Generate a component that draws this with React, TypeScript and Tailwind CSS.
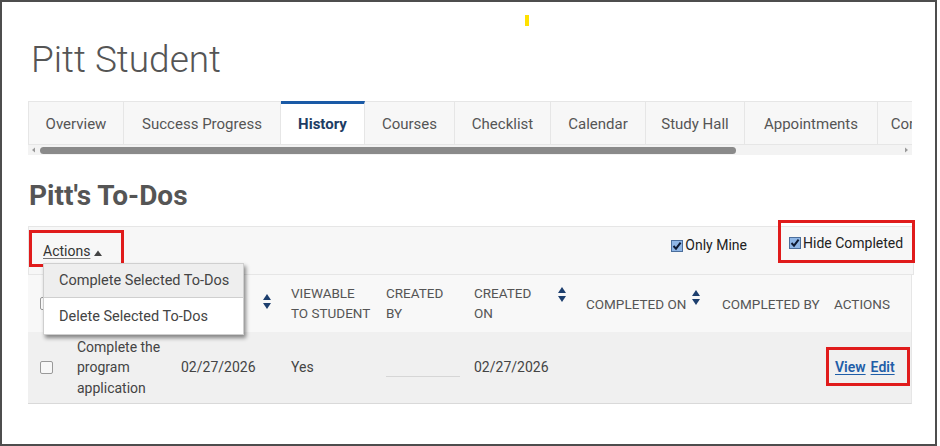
import React from "react";

const tabs = [
  { label: "Overview", w: "w-[95px]" },
  { label: "Success Progress", w: "w-[157px]" },
  { label: "History", w: "w-[84px]", active: true },
  { label: "Courses", w: "w-[90px]" },
  { label: "Checklist", w: "w-[96px]" },
  { label: "Calendar", w: "w-[95px]" },
  { label: "Study Hall", w: "w-[99px]" },
  { label: "Appointments", w: "w-[133px]" },
  { label: "Comments", w: "w-[100px]" },
];

const SortIcon = () => (
  <svg width="8" height="15" viewBox="0 0 8 15" className="shrink-0">
    <polygon points="0,6 4,0 8,6" fill="#1d3f6e" />
    <polygon points="0,9 8,9 4,15" fill="#1d3f6e" />
  </svg>
);

const CheckedBox = () => (
  <svg width="12" height="12" viewBox="0 0 12 12" className="shrink-0">
    <rect x="0.5" y="0.5" width="11" height="11" fill="#8fb6e6" stroke="#4b6e9c" />
    <path d="M2.5 6 L5 8.6 L9.6 2.6" fill="none" stroke="#0e1a33" strokeWidth="2" />
  </svg>
);

const App = () => {
  return (
    <div className="w-[940px] h-[446px] bg-white" style={{ fontFamily: "Roboto, 'Liberation Sans', sans-serif" }}>
      <div className="relative w-[937px] h-[446px] border-2 border-[#4d4d4d] overflow-hidden pl-[26px]">
        {/* stray yellow marker in the screenshot */}
        <div className="absolute left-[523px] top-[13px] w-[4px] h-[11px] bg-[#ffe100]" />

        <div className="mt-[35px] text-[37px] leading-[46px] font-light text-[#555] pl-[3px]">Pitt Student</div>

        {/* tabs */}
        <div className="mt-[18px] w-[884px] overflow-hidden">
          <div className="flex h-[44px] border-t border-b border-l border-[#e6e6e6] bg-[#f7f7f7] w-max">
            {tabs.map((t) => (
              <div
                key={t.label}
                className={
                  t.active
                    ? `${t.w} shrink-0 flex items-center justify-center pt-[1px] bg-white border-t-[3px] border-[#1a5aa6] border-r border-r-[#e6e6e6] -mt-px text-[15px] font-bold text-[#1d3c63]`
                    : `${t.w} shrink-0 flex items-center justify-center pt-[3px] border-r border-[#e6e6e6] text-[15px] text-[#555]`
                }
              >
                {t.label}
              </div>
            ))}
          </div>
          <div className="flex items-center h-[10px] bg-[#f3f3f3]">
            <svg width="12" height="8" viewBox="0 0 12 8" className="shrink-0">
              <polygon points="4,4 7,1.5 7,6.5" fill="#999" />
            </svg>
            <div className="w-[696px] h-[7px] rounded-full bg-[#8a8a8a]" />
            <div className="flex-1" />
            <svg width="12" height="8" viewBox="0 0 12 8" className="shrink-0">
              <polygon points="8,4 5,1.5 5,6.5" fill="#999" />
            </svg>
          </div>
        </div>

        <div className="mt-[23px] text-[28px] leading-[34px] font-bold text-[#555] pl-[1px] pt-[1px]">Pitt's To-Dos</div>

        {/* toolbar */}
        <div className="relative mt-[13px] w-[886px] h-[49px] bg-[#f7f7f7] border border-[#e6e6e6] flex items-start justify-between">
          <div className="mt-[3px] w-[95px] h-[37px] border-[3px] border-[#e01b1b] flex items-center pl-[11px] pt-[6px]">
            <span className="text-[14px] text-[#333] underline underline-offset-2 decoration-[#777]">Actions</span>
            <svg width="10" height="8" viewBox="0 0 10 8" className="ml-[3px] mt-[3px]">
              <polygon points="1,7 5,1.5 9,7" fill="#444" />
            </svg>
          </div>
          <div className="flex items-start">
            <div className="flex items-center gap-[2px] mt-[8px] text-[14px] text-[#222]">
              <CheckedBox />
              <span>Only Mine</span>
            </div>
            <div className="ml-[31px] -mt-[7px] -mr-[2px] w-[137px] h-[43px] border-[3px] border-[#e01b1b] flex items-center pl-[8px] pt-[3px] gap-[2px] text-[14px] text-[#222]">
              <CheckedBox />
              <span>Hide Completed</span>
            </div>
          </div>

          {/* dropdown menu */}
          <div className="absolute left-[14px] top-[36px] z-10 w-[201px] bg-white border border-[#cfcfcf] shadow-[2px_3px_4px_rgba(0,0,0,0.45)]">
            <div className="h-[34px] flex items-center pl-[15px] bg-[#eeeeee] border-b border-[#cfcfcf] text-[14.5px] text-[#444]">
              Complete Selected To-Dos
            </div>
            <div className="h-[36px] flex items-center pl-[15px] pt-[2px] text-[14.5px] text-[#444]">Delete Selected To-Dos</div>
          </div>
        </div>

        {/* table */}
        <div className="w-[884px] border-r border-[#e6e6e6] border-b border-b-[#d9d9d9]">
          <div className="grid grid-cols-[49px_104px_110px_95px_88px_112px_136px_112px_78px] h-[57px] bg-[#f8f8f8] text-[13.5px] leading-[20px] text-[#555] uppercase items-center">
            <div className="pl-[12px]">
              <div className="w-[13px] h-[13px] border border-[#999] rounded-[2px] bg-white" />
            </div>
            <div>To-Do</div>
            <div className="flex items-center justify-between pr-[20px]">
              <span>Due Date</span>
              <span className="-mt-[4px]"><SortIcon /></span>
            </div>
            <div className="-mt-[2px]">Viewable<br />to Student</div>
            <div className="-mt-[2px]">Created<br />By</div>
            <div className="flex items-center justify-between pr-[20px] -mt-[2px]">
              <span>Created<br />On</span>
              <span className="-mt-[16px]"><SortIcon /></span>
            </div>
            <div className="flex items-center gap-[6px]">
              <span>Completed On</span>
              <span className="-mt-[12px]"><SortIcon /></span>
            </div>
            <div>Completed By</div>
            <div>Actions</div>
          </div>

          <div className="grid grid-cols-[49px_104px_110px_95px_88px_112px_136px_112px_78px] h-[71px] bg-[#f0f0f0] text-[14px] text-[#444] items-center">
            <div className="pl-[12px]">
              <div className="w-[13px] h-[13px] border border-[#999] rounded-[2px] bg-[#f7f7f7]" />
            </div>
            <div className="leading-[20.5px] pr-[10px]">Complete the program application</div>
            <div>02/27/2026</div>
            <div>Yes</div>
            <div className="pt-[17px] pr-[14px]">
              <div className="h-[1px] bg-[#d6d6d6]" />
            </div>
            <div>02/27/2026</div>
            <div />
            <div />
            <div className="-ml-[8px] -mt-[3px]">
              <div className="w-[84px] h-[39px] border-[3px] border-[#e01b1b] flex items-center pl-[6px] pt-[2px] gap-[5px] text-[14px] font-semibold text-[#1f5ea8]">
                <span className="underline underline-offset-2">View</span>
                <span className="underline underline-offset-2">Edit</span>
              </div>
            </div>
          </div>
        </div>
      </div>
    </div>
  );
};

export default App;
